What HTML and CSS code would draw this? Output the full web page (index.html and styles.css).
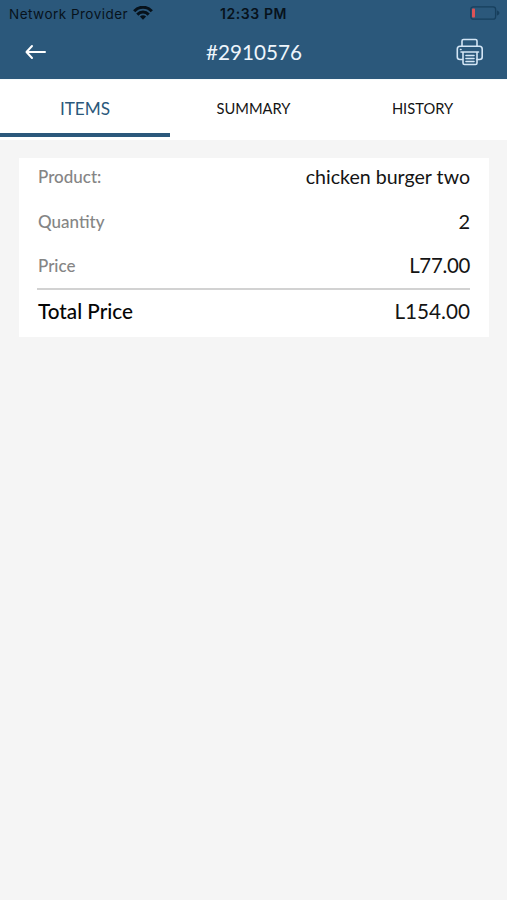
FILE: index.html
```html
<!DOCTYPE html>
<html lang="en">
<head>
<meta charset="utf-8">
<title>Order #2910576</title>
<link rel="stylesheet" href="styles.css">
</head>
<body>
<header class="header">
  <div class="status">
    <div class="carrier"><span>Network Provider</span>
      <svg class="wifi" width="20" height="14" viewBox="0 0 20 14" fill="none" stroke="#07121b" stroke-width="3"><path d="M1.2 5.2C6-.1 14-.1 18.8 5.2"/><path d="M4.3 8.6C7.5 5.200 12.500 5.200 15.700 8.600"/><path d="M10 13.700 6.900 10.600Q10 7.700 13.100 10.600Z" fill="#07121b" stroke="none"/></svg>
    </div>
    <time class="clock">12:33 PM</time>
    <svg class="battery" width="30" height="14" viewBox="0 0 30 14"><rect x=".8" y=".8" width="24.800" height="12.400" rx="2.500" fill="none" stroke="#173f5d" stroke-width="1.300"/><rect x="2" y="2.500" width="3" height="9" rx=".8" fill="#dc5357"/><path d="M26.800 4.200Q29.500 5.500 29.500 7T26.800 9.800Z" fill="#173f5d"/></svg>
  </div>
  <div class="titlebar">
    <svg class="back" width="22" height="16" viewBox="0 0 22 16" fill="none" stroke="#fff" stroke-width="2" stroke-linecap="round" stroke-linejoin="round"><path d="M20 8H2M7 2 1.500 8 7 14"/></svg>
    <h1 class="title">#2910576</h1>
    <svg class="printer" width="28" height="28" viewBox="0 0 28 28" fill="none" stroke="#d3e5f5" stroke-width="1.600" stroke-linejoin="round" stroke-linecap="round"><path d="M6 8V3Q6 1.500 7.500 1.500H19.500Q21 1.500 21 3V8"/><path d="M6.500 21.500H4Q1.300 21.500 1.300 19V11Q1.300 8.300 4 8.300H23.500Q26.200 8.300 26.200 11V19Q26.200 21.500 23.500 21.500H21"/><path d="M5 14H22.500M7 14V25Q7 26.500 8.500 26.500H19.500Q21 26.500 21 25V14M10 17.500H18M10 20.500H18M10 23.500H18M4.500 11.500H5"/></svg>
  </div>
</header>
<nav class="tabs">
  <a class="tab active">ITEMS</a>
  <a class="tab">SUMMARY</a>
  <a class="tab">HISTORY</a>
</nav>
<main class="card">
  <div class="row"><span class="label">Product:</span><span class="value">chicken burger two</span></div>
  <div class="row"><span class="label">Quantity</span><span class="value quantity">2</span></div>
  <div class="row"><span class="label">Price</span><span class="value price">L77.00</span></div>
  <div class="row total"><span class="label">Total Price</span><span class="value amount">L154.00</span></div>
</main>
</body>
</html>
```

FILE: styles.css
```css
* { box-sizing: border-box; }
body { margin: 0; min-height: 900px; background: #f5f5f5; font-family: Lato, sans-serif; color: #141414; }
.header { height: 79px; background: #2b587b; }
.status { height: 27px; padding: 0 7px 0 9px; display: grid; grid-template-columns: 1fr auto 1fr; align-items: center; font-family: Inter, sans-serif; font-size: 13.5px; color: #07121b; }
.carrier { display: flex; align-items: center; gap: 5px; letter-spacing: .48px; white-space: nowrap; }
.wifi { margin-top: -2px; }
.clock { font-size: 14px; font-weight: 600; letter-spacing: .6px; margin-right: 2px; }
.battery { justify-self: end; margin-top: -1px; }
.titlebar { height: 50px; padding: 0 23px 0 25px; display: grid; grid-template-columns: 1fr auto 1fr; align-items: center; }
.title { margin: 0 1px 0 0; font-size: 20.7px; font-weight: 400; color: #eef5fb; line-height: 50px; }
.printer { justify-self: end; }
.tabs { height: 61px; display: grid; grid-template-columns: repeat(3, 1fr); background: #fff; border-top: 1px solid #f5fafc; }
.tab { height: 57px; display: flex; align-items: center; justify-content: center; font-size: 14.7px; padding-bottom: 1px; }
.active { font-size: 17.2px; color: #2b587b; border-bottom: 4px solid #2b587b; padding: 4px 0 0; margin-right: -1px; }
.card { width: 470px; height: 179px; margin: 18px 0 0 19px; padding: 0 19px 0 18px; background: #fff; }
.row { height: 44.5px; display: flex; align-items: center; justify-content: space-between; padding-bottom: 7px; }
.label { padding-left: 1px; font-size: 17px; font-weight: 500; color: #858585; }
.value { font-size: 19.6px; }
.quantity { font-size: 20px; }
.price { font-size: 20.4px; letter-spacing: -.3px; margin-top: -2px; }
.amount { font-size: 20.7px; }
.total { height: 46px; margin-top: -4px; padding: 0 0 2px; border-top: 2px solid #d2d2d2; }
.total .label { font-size: 20.7px; font-weight: 500; color: #050505; }
```
